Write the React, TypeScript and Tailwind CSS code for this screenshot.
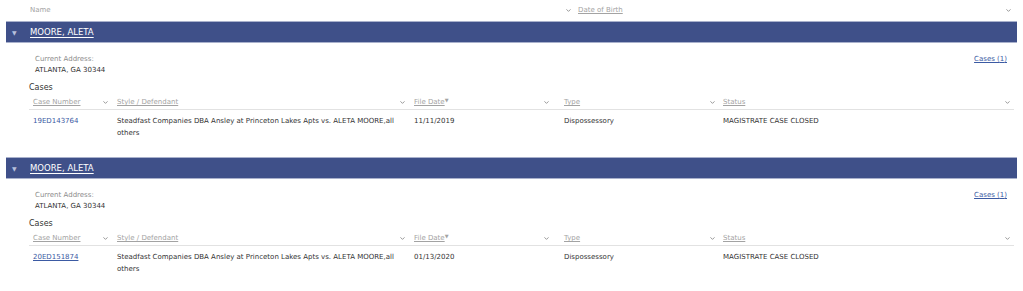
import { ChevronDown } from 'lucide-react'

type CaseRow = {
  number: string
  visited?: boolean
  style: string
  fileDate: string
  type: string
  status: string
}

const PARTIES: { name: string; address: string; cases: CaseRow[] }[] = [
  {
    name: 'MOORE, ALETA',
    address: 'ATLANTA, GA 30344',
    cases: [
      {
        number: '19ED143764',
        style: 'Steadfast Companies DBA Ansley at Princeton Lakes Apts vs. ALETA MOORE,all others',
        fileDate: '11/11/2019',
        type: 'Dispossessory',
        status: 'MAGISTRATE CASE CLOSED',
      },
    ],
  },
  {
    name: 'MOORE, ALETA',
    address: 'ATLANTA, GA 30344',
    cases: [
      {
        number: '20ED151874',
        visited: true,
        style: 'Steadfast Companies DBA Ansley at Princeton Lakes Apts vs. ALETA MOORE,all others',
        fileDate: '01/13/2020',
        type: 'Dispossessory',
        status: 'MAGISTRATE CASE CLOSED',
      },
    ],
  },
]

function Chev() {
  return <ChevronDown className="w-[7px] h-[7px] text-[#8a8a8a] shrink-0" strokeWidth={3} />
}

function PartySection({ party }: { party: (typeof PARTIES)[number] }) {
  return (
    <div className="pb-[18px]">
      {/* name bar */}
      <div className="mx-[6px] h-[22px] flex items-center bg-[#3f5089] border-y border-[#a9b1cc]">
        <span className="ml-[6px] w-[18px] text-[6px] text-[#b8c0dc]">▼</span>
        <a href="#" className="text-[8.5px] text-white underline underline-offset-2">{party.name}</a>
      </div>

      <div className="pl-[29px] pr-[9px]">
        {/* address + link */}
        <div className="flex justify-between pt-[11px]">
          <div className="pl-[6px] text-[7px] leading-[11px]">
            <div className="text-[#8c8c8c]">Current Address:</div>
            <div className="text-[#333]">{party.address}</div>
          </div>
          <a href="#" className="text-[7px] leading-[11px] text-[#3b5aa3] underline pr-[7px]">
            Cases ({party.cases.length})
          </a>
        </div>

        <div className="mt-[6px] text-[8px] leading-[12px] text-[#333]">Cases</div>

        {/* cases table */}
        <div className="mt-[2px]">
          <div className="grid grid-cols-[84px_297px_150px_160px_1fr] h-[14px] items-center border-b border-[#e2e2e2] text-[7px] text-[#a3a3a3]">
            <div className="flex items-center justify-between pl-[4px] pr-[4px]">
              <span className="underline">Case Number</span>
              <Chev />
            </div>
            <div className="flex items-center justify-between pl-[4px] pr-[4px]">
              <span className="underline">Style / Defendant</span>
              <Chev />
            </div>
            <div className="flex items-center justify-between pl-[4px] pr-[10px]">
              <span>
                <span className="underline">File Date</span>
                <span className="text-[5px] align-top">▼</span>
              </span>
              <Chev />
            </div>
            <div className="flex items-center justify-between pl-[4px] pr-[4px]">
              <span className="underline">Type</span>
              <Chev />
            </div>
            <div className="flex items-center justify-between pl-[3px] pr-[3px]">
              <span className="underline">Status</span>
              <Chev />
            </div>
          </div>

          {party.cases.map((c) => (
            <div
              key={c.number}
              className="grid grid-cols-[84px_297px_150px_160px_1fr] pt-[5px] text-[7px] leading-[12px] text-[#333]"
            >
              <div className="pl-[4px]">
                <a href="#" className={c.visited ? 'text-[#3b5aa3] underline' : 'text-[#3b5aa3]'}>
                  {c.number}
                </a>
              </div>
              <div className="pl-[4px] pr-[6px]">{c.style}</div>
              <div className="pl-[4px]">{c.fileDate}</div>
              <div className="pl-[4px]">{c.type}</div>
              <div className="pl-[3px]">{c.status}</div>
            </div>
          ))}
        </div>
      </div>
    </div>
  )
}

export default function App() {
  return (
    <div className="w-full min-h-[291px] bg-white font-['DejaVu_Sans',Verdana,sans-serif]">
      {/* column header */}
      <div className="h-[21px] flex items-center text-[7px] text-[#a3a3a3]">
        <div className="ml-[26px] w-[548px] flex items-center justify-between pl-[4px] pr-[2px]">
          <span>Name</span>
          <Chev />
        </div>
        <div className="flex-1 flex items-center justify-between pl-[4px] pr-[11px]">
          <span className="underline">Date of Birth</span>
          <Chev />
        </div>
      </div>

      {PARTIES.map((p, i) => (
        <PartySection key={i} party={p} />
      ))}
    </div>
  )
}
